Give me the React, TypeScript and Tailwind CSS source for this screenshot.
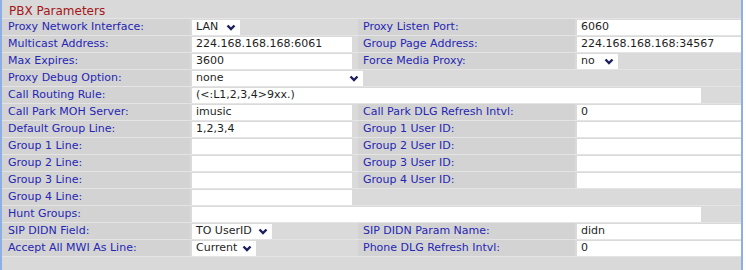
import React from 'react';

const font = { fontFamily: '"DejaVu Sans", Verdana, sans-serif' };

const Chevron = () => (
  <svg width="10" height="7" viewBox="0 0 10 7" className="shrink-0">
    <polyline points="1.5,1.5 5,5 8.5,1.5" fill="none" stroke="#1b1f5e" strokeWidth="2.4" />
  </svg>
);

const Label = ({ text, w, pad = 'pl-[6px]' }: { text?: string; w: string; pad?: string }) => (
  <div className={`${w} ${pad} h-full shrink-0 bg-[#d3d3d3] flex items-center text-[11px] text-[#2626b4] whitespace-nowrap`}>
    {text}
  </div>
);

const Input = ({ value, w }: { value?: string; w: string }) => (
  <div className={`${w} h-[15px] bg-white pl-[4px] flex items-center text-[11px] text-[#1e1e1e] whitespace-nowrap`}>
    {value}
  </div>
);

const Select = ({ value, w }: { value: string; w: string }) => (
  <div className={`${w} h-[15px] bg-white pl-[4px] pr-[4px] flex items-center justify-between text-[11px] text-[#1e1e1e] whitespace-nowrap`}>
    <span>{value}</span>
    <Chevron />
  </div>
);

const Value = ({ children, w }: { children?: React.ReactNode; w: string }) => (
  <div className={`${w} h-full shrink-0 bg-[#dadada] pl-[2px] flex items-center`}>{children}</div>
);

const Row = ({ children }: { children: React.ReactNode }) => (
  <div className="flex h-[16px]">{children}</div>
);

const L1 = 'w-[188px]';
const V1 = 'w-[168px]';
const L2 = 'w-[217px]';

export default function App() {
  return (
    <div className="w-[746px] h-[270px] bg-white" style={font}>
      <div className="w-[743px] h-full border-l-2 border-r-2 border-[#8eaee6] bg-[#e4e4e4] flex flex-col gap-px">
        <div className="h-[18px] shrink-0 bg-[#d9d9d9] pl-[7px] pt-[3px] flex items-center text-[12px] text-[#a3161a]">
          PBX Parameters
        </div>
        <Row>
          <Label text="Proxy Network Interface:" w={L1} />
          <Value w={V1}><Select value="LAN" w="w-[48px]" /></Value>
          <Label text="Proxy Listen Port:" w={L2} pad="pl-[5px]" />
          <Value w="flex-1"><Input value="6060" w="w-full" /></Value>
        </Row>
        <Row>
          <Label text="Multicast Address:" w={L1} />
          <Value w={V1}><Input value="224.168.168.168:6061" w="w-[160px]" /></Value>
          <Label text="Group Page Address:" w={L2} pad="pl-[5px]" />
          <Value w="flex-1"><Input value="224.168.168.168:34567" w="w-full" /></Value>
        </Row>
        <Row>
          <Label text="Max Expires:" w={L1} />
          <Value w={V1}><Input value="3600" w="w-[160px]" /></Value>
          <Label text="Force Media Proxy:" w={L2} pad="pl-[5px]" />
          <Value w="flex-1"><Select value="no" w="w-[41px]" /></Value>
        </Row>
        <Row>
          <Label text="Proxy Debug Option:" w={L1} />
          <Value w="w-[175px]"><Select value="none" w="w-[171px]" /></Value>
          <Value w="flex-1" />
        </Row>
        <Row>
          <Label text="Call Routing Rule:" w={L1} />
          <Value w="flex-1"><Input value="(<:L1,2,3,4>9xx.)" w="w-[509px]" /></Value>
        </Row>
        <Row>
          <Label text="Call Park MOH Server:" w={L1} />
          <Value w={V1}><Input value="imusic" w="w-[160px]" /></Value>
          <Label text="Call Park DLG Refresh Intvl:" w={L2} pad="pl-[5px]" />
          <Value w="flex-1"><Input value="0" w="w-full" /></Value>
        </Row>
        <Row>
          <Label text="Default Group Line:" w={L1} />
          <Value w={V1}><Input value="1,2,3,4" w="w-[160px]" /></Value>
          <Label text="Group 1 User ID:" w={L2} pad="pl-[5px]" />
          <Value w="flex-1"><Input w="w-full" /></Value>
        </Row>
        {[1, 2, 3].map((n) => (
          <Row key={n}>
            <Label text={`Group ${n} Line:`} w={L1} />
            <Value w={V1}><Input w="w-[160px]" /></Value>
            <Label text={`Group ${n + 1} User ID:`} w={L2} pad="pl-[5px]" />
            <Value w="flex-1"><Input w="w-full" /></Value>
          </Row>
        ))}
        <Row>
          <Label text="Group 4 Line:" w={L1} />
          <Value w={V1}><Input w="w-[160px]" /></Value>
          <Value w="flex-1" />
        </Row>
        <Row>
          <Label text="Hunt Groups:" w={L1} />
          <Value w="flex-1"><Input w="w-[509px]" /></Value>
        </Row>
        <Row>
          <Label text="SIP DIDN Field:" w={L1} />
          <Value w={V1}><Select value="TO UserID" w="w-[80px]" /></Value>
          <Label text="SIP DIDN Param Name:" w={L2} pad="pl-[5px]" />
          <Value w="flex-1"><Input value="didn" w="w-full" /></Value>
        </Row>
        <Row>
          <Label text="Accept All MWI As Line:" w={L1} />
          <Value w={V1}><Select value="Current" w="w-[64px]" /></Value>
          <Label text="Phone DLG Refresh Intvl:" w={L2} pad="pl-[5px]" />
          <Value w="flex-1"><Input value="0" w="w-full" /></Value>
        </Row>
        <div className="flex-1 bg-[#d9d9d9]" />
      </div>
    </div>
  );
}
